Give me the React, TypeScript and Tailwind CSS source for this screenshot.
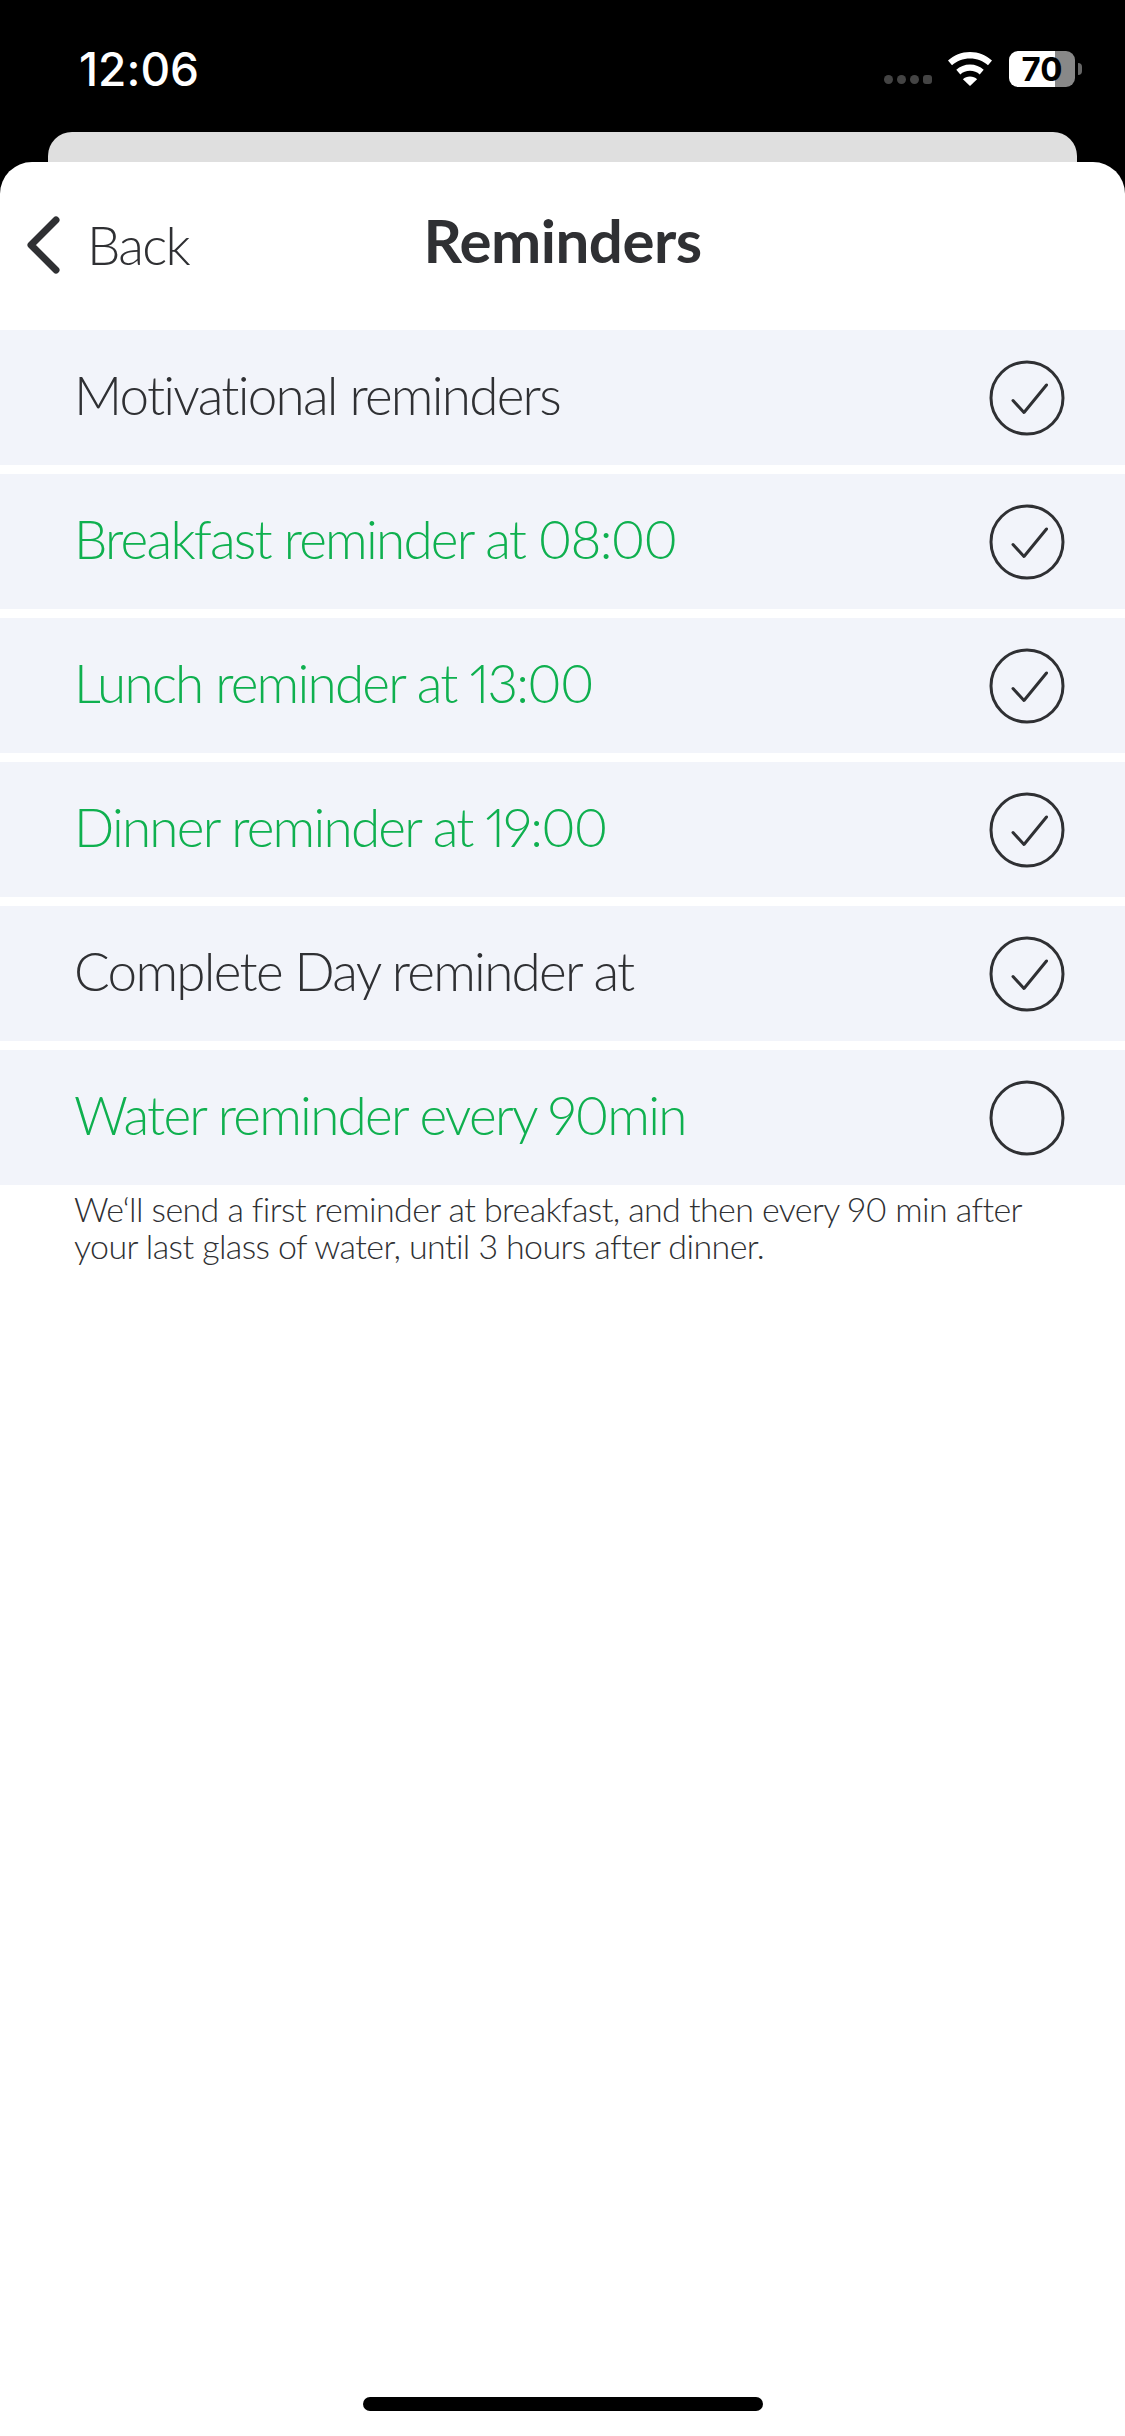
const rows = [
  { label: "Motivational reminders", green: false, checked: true },
  { label: "Breakfast reminder at 08:00", green: true, checked: true },
  { label: "Lunch reminder at 13:00", green: true, checked: true },
  { label: "Dinner reminder at 19:00", green: true, checked: true },
  { label: "Complete Day reminder at", green: false, checked: true },
  { label: "Water reminder every 90min", green: true, checked: false },
];

const CheckCircle = ({ checked }: { checked: boolean }) => (
  <svg width="76" height="76" viewBox="0 0 76 76" fill="none" stroke="#2f3033" strokeWidth="3">
    <circle cx="38" cy="38" r="36" />
    {checked && <path d="M24 40.5 L35 52.5 L57.5 25" strokeLinecap="round" strokeLinejoin="round" />}
  </svg>
);

const StatusBar = () => (
  <div className="h-[132px] flex justify-between pl-[79px] pr-[43px] text-white">
    <span className="mt-[42px] text-[46px] leading-[54px] font-medium font-['Inter',sans-serif]">12:06</span>
    <div className="flex items-start">
      <div className="flex gap-[4px] mt-[75px]">
        <div className="size-[9px] rounded-full bg-[#444444]" />
        <div className="size-[9px] rounded-full bg-[#444444]" />
        <div className="size-[9px] rounded-full bg-[#444444]" />
        <div className="size-[9px] rounded-[3px] bg-[#444444]" />
      </div>
      <svg className="ml-[15px] mt-[52px]" width="46" height="34" viewBox="0 0 46 34" fill="white">
        <path d="M23 0C14.5 0 6.8 3.3 1 8.6l4 4.6C9.7 9 16 6.4 23 6.4s13.3 2.6 18 6.8l4-4.6C39.2 3.3 31.500 0 23 0z" />
        <path d="M23 12.500c-5.300 0-10.100 2-13.700 5.300l4 4.600c2.500-2.200 6-3.600 9.700-3.600s7.200 1.400 9.700 3.600l4-4.600c-3.600-3.300-8.400-5.300-13.700-5.300z" />
        <path d="M23 24.500c-2.800 0-5.300 1-7.100 2.700L23 34l7.100-6.800c-1.800-1.700-4.300-2.700-7.100-2.700z" />
      </svg>
      <div className="relative ml-[16px] mt-[51px] flex h-[36px] w-[66px]">
        <div className="w-[46px] rounded-l-[9px] bg-white" />
        <div className="flex-1 rounded-r-[9px] bg-[#888888]" />
        <span className="absolute inset-0 text-center text-[33px] leading-[36px] font-bold text-black font-['Inter',sans-serif]">70</span>
      </div>
      <div className="ml-[3px] mt-[63px] h-[12px] w-[4px] rounded-r-full bg-[#666666]" />
    </div>
  </div>
);

export default function App() {
  return (
    <div className="w-[1125px] h-[2436px] flex flex-col bg-black font-['Lato',sans-serif] text-[#2f3033] [font-variant-ligatures:none] proportional-nums">
      <StatusBar />
      <div className="h-[30px] mx-[48px] rounded-t-[24px] bg-[#dfdfdf]" />
      <div className="flex-1 flex flex-col rounded-t-[32px] bg-white">
        <header className="h-[168px] grid grid-cols-[1fr_auto_1fr] items-start">
          <div className="flex items-center pl-[27px] pt-[54px]">
            <svg width="34" height="58" viewBox="0 0 34 58" fill="none" stroke="#2f3033" strokeWidth="7" strokeLinecap="round" strokeLinejoin="round">
              <path d="M29 4 L4 29 L29 54" />
            </svg>
            <span className="ml-[26px] text-[53px] leading-[58px] font-light tracking-[-1.75px]">Back</span>
          </div>
          <h1 className="pt-[45px] text-[60px] leading-[66px] font-bold tracking-[-0.5px]">Reminders</h1>
        </header>
        <div className="flex flex-col gap-[9px]">
          {rows.map((row) => (
            <div key={row.label} className="h-[135px] flex items-center justify-between pl-[74px] pr-[60px] bg-[#f2f4fa]">
              <span className={`pb-[6px] text-[53px] font-light tracking-[-1.75px] ${row.green ? "text-[#0fb04f]" : ""}`}>{row.label}</span>
              <CheckCircle checked={row.checked} />
            </div>
          ))}
        </div>
        <p className="mt-[5px] pl-[74px] text-[34px] leading-[37px] font-light tracking-[-0.6px]">
          We‘ll send a first reminder at breakfast, and then every 90 min after
          <br />
          your last glass of water, until 3 hours after dinner.
        </p>
        <div className="mt-auto mb-[25px] mx-auto h-[14px] w-[400px] rounded-full bg-black" />
      </div>
    </div>
  );
}
